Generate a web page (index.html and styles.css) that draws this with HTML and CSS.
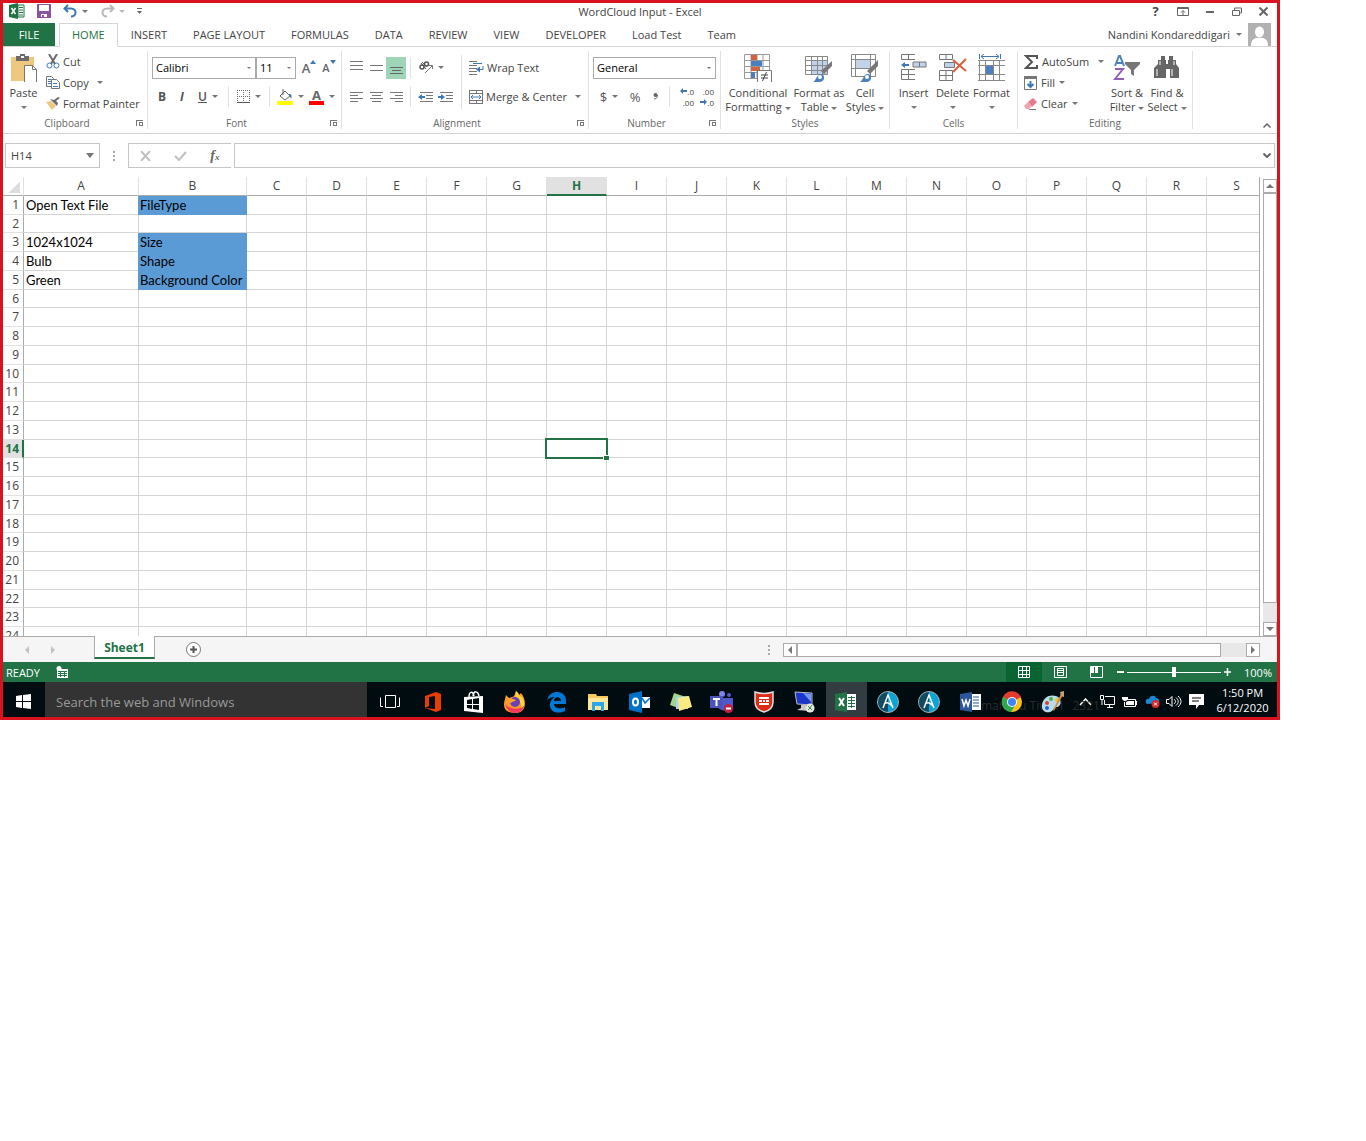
FILE: index.html
```html
<!DOCTYPE html>
<html lang="en">
<head>
  <meta charset="UTF-8" />
  <meta name="viewport" content="width=device-width, initial-scale=1.0">
  <title>WordCloud Input - Excel</title>
  <link rel="stylesheet" href="styles.css">
</head>
<body>

<div class="window">

  <!-- Title bar -->
  <header class="titlebar">
    <div class="quick-access">
      <svg class="app-icon" width="16" height="16" viewBox="0 0 16 16"><path d="M9 2h6v12H9z" fill="#fff" stroke="#217346"/><path d="M10 4.500h4M10 7h4M10 9.500h4M10 12h4" stroke="#217346"/><path d="M0 2l9-2v16l-9-2z" fill="#217346"/><path d="M2.500 5l4 6M6.500 5l-4 6" stroke="#fff" stroke-width="1.500"/></svg>
      <button title="Save"><svg width="14" height="14" viewBox="0 0 14 14"><path d="M0 0h14v14H0z" fill="#8a53a8"/><path d="M2 1h10v6H2zM4 10h6v3H7v-2H5v2H4z" fill="#fff"/></svg></button>
      <button class="has-caret" title="Undo"><svg width="15" height="14" viewBox="0 0 15 14"><path d="M5 1L1.500 4.500 5 8M2 4.500h6c6 0 6 8 0 8" fill="none" stroke="#3f78b5" stroke-width="2"/></svg><i class="caret"></i></button>
      <button class="has-caret" title="Redo"><svg width="15" height="14" viewBox="0 0 15 14"><path d="M10 1l3.500 3.500L10 8M13 4.500H7c-6 0-6 8 0 8" fill="none" stroke="#b9b9b9" stroke-width="2"/></svg><i class="caret light"></i></button>
      <button title="Customize Quick Access Toolbar"><svg width="5" height="6" viewBox="0 0 5 6"><path d="M0 .5h5" stroke="#666"/><path d="M0 3h5L2.500 6z" fill="#666"/></svg></button>
    </div>
    <h1>WordCloud Input - Excel</h1>
    <div class="window-buttons">
      <button title="Help"><b>?</b></button>
      <button title="Ribbon Display Options"><svg width="12" height="9" viewBox="0 0 12 9"><path d="M.5.500h11v8H.5zM.500 1.500h11M6 8V4M4 5.500l2-2 2 2" fill="none" stroke="#666"/></svg></button>
      <button title="Minimize"><svg width="8" height="4" viewBox="0 0 8 4"><path d="M0 3h8" stroke="#666" stroke-width="2"/></svg></button>
      <button title="Restore"><svg width="10" height="9" viewBox="0 0 10 9"><path d="M2.500 3V1h7v5H8" fill="none" stroke="#666"/><path d="M.5 3.500h7v5h-7z" fill="#fff" stroke="#666"/></svg></button>
      <button title="Close"><svg width="9" height="9" viewBox="0 0 9 9"><path d="M.5.500l8 8M8.500.500l-8 8" stroke="#666" stroke-width="2"/></svg></button>
    </div>
  </header>

  <!-- Ribbon tabs -->
  <nav class="tabs">
    <button class="file-tab">FILE</button>
    <a href="#home" class="tab active">HOME</a>
    <a href="#insert" class="tab">INSERT</a>
    <a href="#layout" class="tab">PAGE LAYOUT</a>
    <a href="#formulas" class="tab">FORMULAS</a>
    <a href="#data" class="tab">DATA</a>
    <a href="#review" class="tab">REVIEW</a>
    <a href="#view" class="tab">VIEW</a>
    <a href="#developer" class="tab">DEVELOPER</a>
    <a href="#loadtest" class="tab">Load Test</a>
    <a href="#team" class="tab">Team</a>
    <button class="user">Nandini Kondareddigari <i class="caret"></i>
      <svg width="23" height="23" viewBox="0 0 23 23"><path d="M0 0h23v23H0z" fill="#b1b1b1"/><ellipse cx="11.500" cy="9" rx="4.500" ry="5.500" fill="#fff"/><path d="M3 23c0-6 3-8 6-8h5c3 0 6 2 6 8z" fill="#fff"/></svg>
    </button>
  </nav>

  <!-- Ribbon -->
  <section class="ribbon" id="home">
    <div class="group clipboard">
      <div class="group-body">
        <button class="big paste"><svg width="26" height="28" viewBox="0 0 26 28"><path d="M0 3h23v24H0z" fill="#edc87e"/><path d="M5 7V2h4V0h5v2h4v5z" fill="#6b6b6b"/><path d="M10 2h3v2h-3z" fill="#fff"/><path d="M13.500 11.500h8l4 4V29h-12z" fill="#fff" stroke="#777"/><path d="M21.500 11.500v4h4" fill="none" stroke="#777"/></svg><span>Paste</span><i class="caret"></i></button>
        <div class="stack">
          <button><svg width="14" height="15" viewBox="0 0 14 15"><path d="M3 0l6 10M11 0L5 10" stroke="#6b6b6b" stroke-width="2"/><circle cx="3.500" cy="11.500" r="2.500" fill="none" stroke="#3f78b5"/><circle cx="10.500" cy="11.500" r="2.500" fill="none" stroke="#3f78b5"/></svg>Cut</button>
          <button><svg width="14" height="13" viewBox="0 0 14 13"><path d="M.5.500h5l2 2v8h-7z" fill="#fff" stroke="#777"/><path d="M5.500 3.500h5l3 3v6h-8z" fill="#fff" stroke="#777"/><path d="M2 3.500h3M2 5.500h3M2 7.500h3M7 7.500h4M7 10.500h5" stroke="#3f78b5"/></svg>Copy <i class="caret far"></i></button>
          <button><svg width="14" height="13" viewBox="0 0 14 13"><path d="M0 5l5-1 5 5-4 4z" fill="#edc87e"/><path d="M4 2l7 7 1-3-2-2 4-3-2-1-4 3z" fill="#6b6b6b"/></svg>Format Painter</button>
        </div>
      </div>
      <div class="group-label">Clipboard<i class="launcher"></i></div>
    </div>

    <div class="group font">
      <div class="group-body rows">
        <div class="row">
          <label class="drop font-name"><select aria-label="Font"><option>Calibri</option></select><i class="caret"></i></label>
          <label class="drop font-size"><select aria-label="Font size"><option>11</option></select><i class="caret"></i></label>
          <button class="tool grow" title="Increase Font Size">A<svg width="6" height="4" viewBox="0 0 6 4"><path d="M0 4l3-4 3 4z" fill="#3f78b5"/></svg></button>
          <button class="tool grow small" title="Decrease Font Size">A<svg width="6" height="4" viewBox="0 0 6 4"><path d="M0 0l3 4 3-4z" fill="#3f78b5"/></svg></button>
        </div>
        <div class="row">
          <button class="tool" title="Bold"><b>B</b></button>
          <button class="tool" title="Italic"><b><em>I</em></b></button>
          <button class="tool has-caret" title="Underline"><u>U</u><i class="caret"></i></button>
          <i class="divider"></i>
          <button class="tool has-caret" title="Borders"><svg width="13" height="13" viewBox="0 0 13 13"><path d="M.5 0v12M12.500 0v12M0 .5h13M6.500 0v12M0 6.500h13" stroke="#666" stroke-dasharray="1 1"/><path d="M0 12.500h13" stroke="#555"/></svg><i class="caret"></i></button>
          <i class="divider"></i>
          <button class="tool has-caret" title="Fill Color"><svg width="16" height="16" viewBox="0 0 16 16"><path d="M3 7l5-5 5 5-5 4zM6 0v6" fill="#fff" stroke="#666"/><path d="M12 5c3 0 3 2 2 5z" fill="#3f78b5"/><path d="M0 12h16v4H0z" fill="#ff0"/></svg><i class="caret"></i></button>
          <button class="tool has-caret" title="Font Color"><span class="font-color">A</span><i class="caret"></i></button>
        </div>
      </div>
      <div class="group-label">Font<i class="launcher"></i></div>
    </div>

    <div class="group alignment">
      <div class="group-body">
        <div class="rows">
          <div class="row">
            <button class="tool" title="Top Align"><svg width="13" height="13" viewBox="0 0 13 13"><path d="M0 .5h13M0 4.500h13M0 8.500h13" stroke="#777"/></svg></button>
            <button class="tool" title="Middle Align"><svg width="13" height="13" viewBox="0 0 13 13"><path d="M0 4.500h13M0 9.500h13" stroke="#777"/></svg></button>
            <button class="tool pressed" title="Bottom Align"><svg width="13" height="13" viewBox="0 0 13 13"><path d="M0 6.500h13M2 9.500h9M0 12.500h13" stroke="#666"/></svg></button>
            <i class="divider"></i>
            <button class="tool has-caret" title="Orientation"><svg width="14" height="13" viewBox="0 0 14 13"><path d="M6 12l7-7M10 4.500h3.500V8" fill="none" stroke="#777"/><circle cx="3" cy="6" r="2" fill="none" stroke="#555" stroke-width="1.500"/><circle cx="7.500" cy="3" r="2" fill="none" stroke="#555" stroke-width="1.500"/><path d="M2 2l5 6M3 1l5 5" stroke="#555"/></svg><i class="caret"></i></button>
          </div>
          <div class="row">
            <button class="tool" title="Align Left"><svg width="13" height="10" viewBox="0 0 13 10"><path d="M0 .5h13M0 3.500h8M0 6.500h13M0 9.500h8" stroke="#777"/></svg></button>
            <button class="tool" title="Center"><svg width="13" height="10" viewBox="0 0 13 10"><path d="M0 .5h13M2 3.500h9M0 6.500h13M2 9.500h9" stroke="#777"/></svg></button>
            <button class="tool" title="Align Right"><svg width="13" height="10" viewBox="0 0 13 10"><path d="M0 .5h13M5 3.500h8M0 6.500h13M5 9.500h8" stroke="#777"/></svg></button>
            <i class="divider"></i>
            <button class="tool" title="Decrease Indent"><svg width="15" height="10" viewBox="0 0 15 10"><path d="M2 .5h13M8 3.500h7M8 6.500h7M2 9.500h13" stroke="#777"/><path d="M0 5l4-3v2h3v2H4v2z" fill="#3f78b5"/></svg></button>
            <button class="tool" title="Increase Indent"><svg width="15" height="10" viewBox="0 0 15 10"><path d="M2 .5h13M8 3.500h7M8 6.500h7M2 9.500h13" stroke="#777"/><path d="M7 5L3 2v2H0v2h3v2z" fill="#3f78b5"/></svg></button>
          </div>
        </div>
        <i class="divider tall"></i>
        <div class="rows wrap-merge">
          <div class="row"><button class="text-tool"><svg width="15" height="14" viewBox="0 0 15 14"><path d="M0 .5h8M0 4.500h8M0 7.500h8M0 10.500h8M0 13.500h8" stroke="#777"/><path d="M4 2.500h9M9 8.500h5V5" fill="none" stroke="#3f78b5"/><path d="M7 8.500l4-3v6z" fill="#3f78b5"/></svg>Wrap Text</button></div>
          <div class="row"><button class="text-tool"><svg width="14" height="14" viewBox="0 0 14 14"><path d="M0 .5h14M.500 0v4M7.500 0v4M13.500 0v4M0 3.500h14M0 10.500h14M.500 10v4M7.500 10v4M13.500 10v4M0 13.500h14M.5 4v6M13.500 4v6" stroke="#777"/><path d="M2 7h10M4 5L2 7l2 2M10 5l2 2-2 2" fill="none" stroke="#3f78b5"/></svg>Merge &amp; Center <i class="caret far"></i></button></div>
        </div>
      </div>
      <div class="group-label">Alignment<i class="launcher"></i></div>
    </div>

    <div class="group number">
      <div class="group-body rows">
        <div class="row">
          <label class="drop format"><select aria-label="Number format"><option>General</option></select><i class="caret"></i></label>
        </div>
        <div class="row">
          <button class="tool has-caret sign" title="Accounting">$<i class="caret"></i></button>
          <button class="tool sign" title="Percent">%</button>
          <button class="tool sign" title="Comma Style"><svg width="5" height="7" viewBox="0 0 5 7"><circle cx="2.500" cy="2" r="2" fill="#666"/><path d="M4.500 2c0 2-1 4-3.500 4" fill="none" stroke="#666"/></svg></button>
          <i class="divider"></i>
          <button class="tool decimal" title="Increase Decimal"><span><svg width="7" height="6" viewBox="0 0 7 6"><path d="M0 3l3-3v2h4v2H3v2z" fill="#3f78b5"/></svg>.0</span><span>.00</span></button>
          <button class="tool decimal" title="Decrease Decimal"><span>.00</span><span><svg width="7" height="6" viewBox="0 0 7 6"><path d="M7 3L4 0v2H0v2h4v2z" fill="#3f78b5"/></svg>.0</span></button>
        </div>
      </div>
      <div class="group-label">Number<i class="launcher"></i></div>
    </div>

    <div class="group styles">
      <div class="group-body">
        <button class="big wide"><svg width="28" height="28" viewBox="0 0 28 28"><path d="M.5.500h25v24H.5zM.5 6.500h25M.5 12.500h25M.5 18.500h25M7 0v24M13 0v24M19 0v24" fill="#fff" stroke="#999"/><path d="M7 1h6v5H7zM7 13h9v4H7z" fill="#d9603f"/><path d="M7 7h11v5H7zM7 18h4v6H7z" fill="#4a80bd"/><path d="M13.500 16.500h14v12h-14z" fill="#fff" stroke="#777"/><path d="M17 21h7M17 24h7M22.500 18l-4 9" stroke="#444"/></svg><span>Conditional</span><span>Formatting <i class="caret"></i></span></button>
        <button class="big medium"><svg width="28" height="28" viewBox="0 0 28 28"><path d="M7 7h16v13H7z" fill="#c0d3ea"/><path d="M.5 2.500h22v18H.5zM.5 6.500h22M.5 11.500h22M.5 16.500h22M6.500 3v18M12.500 3v18M17.500 3v18" fill="none" stroke="#888"/><path d="M27 7v5l-8 8-3-3z" fill="#777"/><path d="M8 28c3-1 3-7 8-8 4 0 5 8-2 8z" fill="#4a80bd"/><circle cx="15" cy="23" r="2" fill="#fff"/></svg><span>Format as</span><span>Table <i class="caret"></i></span></button>
        <button class="big"><svg width="28" height="28" viewBox="0 0 28 28"><path d="M5 6h14v8H5z" fill="#c0d3ea"/><path d="M.5.500h24v22H.5zM.5 5.500h24M.5 14.500h24M4.500 0v22M19.500 0v22" fill="none" stroke="#888"/><path d="M27 6v6l-8 8-3-3z" fill="#777"/><path d="M9 28c3-1 3-8 8-8 4 0 5 8-2 8z" fill="#4a80bd"/><circle cx="16" cy="23" r="2" fill="#fff"/></svg><span>Cell</span><span>Styles <i class="caret"></i></span></button>
      </div>
      <div class="group-label">Styles</div>
    </div>

    <div class="group cells">
      <div class="group-body">
        <button class="big"><svg width="26" height="28" viewBox="0 0 26 28"><path d="M14 .5H.5v5H14M7.500 0v5M14 15.500H.5v10H14M.5 20.500H14M7.500 15v10" fill="none" stroke="#777"/><path d="M12 8h13v5H12z" fill="#c0d3ea" stroke="#777"/><path d="M18.500 8v5" stroke="#777"/><path d="M0 11l4-3v2h4v2H4v2z" fill="#3f78b5"/></svg><span>Insert</span><i class="caret"></i></button>
        <button class="big"><svg width="28" height="28" viewBox="0 0 28 28"><path d="M.5.500h13v5H.5zM7 0v5M.5 16.500h13v10H.5zM.5 21.500h13M7 16v10" fill="none" stroke="#777"/><path d="M5.500 8.500h10v5h-10z" fill="#c0d3ea" stroke="#777"/><path d="M14 6l13 11M27 5L14 18" stroke="#d9603f" stroke-width="2"/></svg><span>Delete</span><i class="caret"></i></button>
        <button class="big"><svg width="27" height="28" viewBox="0 0 27 28"><path d="M1.500 0v5M22.500 0v5M3 2.500h18M6 0L3 2.500 6 5M18 0l3 2.500L18 5" fill="none" stroke="#3f78b5"/><path d="M0 6.500h27M0 11.500h27M0 20.500h27M0 26.500h27M1.500 6v20M7.500 6v20M15.500 6v20M21.500 6v20" stroke="#888"/><path d="M8 12h7v8H8z" fill="#4a80bd"/></svg><span>Format</span><i class="caret"></i></button>
      </div>
      <div class="group-label">Cells</div>
    </div>

    <div class="group editing">
      <div class="group-body">
        <div class="stack">
          <button><svg width="14" height="14" viewBox="0 0 14 14"><path d="M13 4V1H2l6 6-6 6h11v-3" fill="none" stroke="#555" stroke-width="2"/></svg>AutoSum <i class="caret far"></i></button>
          <button><svg width="13" height="14" viewBox="0 0 13 14"><path d="M.5.500h12v13H.5z" fill="#fff" stroke="#777"/><path d="M0 0h13v3H0z" fill="#777"/><path d="M6.500 5v6M3.500 8l3 3 3-3" fill="none" stroke="#3f78b5" stroke-width="2"/></svg>Fill <i class="caret"></i></button>
          <button><svg width="13" height="12" viewBox="0 0 13 12"><path d="M4 4l5-4 4 4-5 5z" fill="#e8798c"/><path d="M0 8l4-4 4 4-3 3H2z" fill="#f0a3b0"/><path d="M5 11.500h7" stroke="#777"/></svg>Clear <i class="caret"></i></button>
        </div>
        <button class="big"><svg width="28" height="28" viewBox="0 0 28 28"><path d="M2 12L6 2h1l4 10M4 9h5" fill="none" stroke="#4a80bd" stroke-width="2"/><path d="M2 15h8L2 25h9" fill="none" stroke="#9160b5" stroke-width="2"/><path d="M12 8h15v2l-6 6v6l-3-2v-4l-6-6z" fill="#777"/></svg><span>Sort &amp;</span><span>Filter <i class="caret"></i></span></button>
        <button class="big"><svg width="26" height="28" viewBox="0 0 26 28"><path d="M4 6h3V2h4v4h1v4h2V6h1V2h4v4h3v4l3 4v10h-9v-9h-4v9H0V14l4-4z" fill="#666"/><path d="M3 15v7M18 15v7M6 7v4M20 7v4" stroke="#fff"/></svg><span>Find &amp;</span><span>Select <i class="caret"></i></span></button>
      </div>
      <div class="group-label">Editing</div>
    </div>

    <button class="collapse" title="Collapse the Ribbon"><svg width="8" height="5" viewBox="0 0 8 5"><path d="M.5 4.500L4 1l3.500 3.500" fill="none" stroke="#666" stroke-width="1.500"/></svg></button>
  </section>

  <!-- Formula bar -->
  <section class="formula-bar">
    <label class="name-box"><input type="text" value="H14" aria-label="Name Box"><i class="caret big-caret"></i></label>
    <i class="dots"></i>
    <div class="formula-buttons">
      <button title="Cancel"><svg width="11" height="10" viewBox="0 0 11 10"><path d="M1 0l9 10M10 0L1 10" stroke="#c0c0c0" stroke-width="2"/></svg></button>
      <button title="Enter"><svg width="13" height="10" viewBox="0 0 13 10"><path d="M1 5l4 4 7-8" fill="none" stroke="#c0c0c0" stroke-width="2"/></svg></button>
      <button class="fx" title="Insert Function"><em>f<small>x</small></em></button>
    </div>
    <label class="formula-input"><input type="text" aria-label="Formula Bar"><svg width="8" height="5" viewBox="0 0 8 5"><path d="M.5.500L4 4 7.500.500" fill="none" stroke="#666" stroke-width="2"/></svg></label>
  </section>

  <!-- Worksheet -->
  <main class="sheet">
    <div class="grid-wrap">
      <table class="grid">
        <thead><tr id="gridHead"></tr></thead>
        <tbody id="gridBody"></tbody>
      </table>
    </div>
    <div class="v-scroll">
      <button title="Scroll up"><i class="arrow up"></i></button>
      <div class="thumb"></div>
      <button title="Scroll down"><i class="arrow down"></i></button>
    </div>
  </main>

  <!-- Sheet tabs -->
  <section class="sheet-bar">
    <button class="sheet-nav" title="Previous sheet"><i class="arrow left"></i></button>
    <button class="sheet-nav" title="Next sheet"><i class="arrow right"></i></button>
    <a href="#sheet1" class="sheet-tab">Sheet1</a>
    <button class="add-sheet" title="New sheet"><svg width="15" height="15" viewBox="0 0 15 15"><circle cx="7.500" cy="7.500" r="7" fill="#fff" stroke="#777"/><path d="M7.500 4v7M4 7.500h7" stroke="#555" stroke-width="2"/></svg></button>
    <i class="dots"></i>
    <div class="h-scroll">
      <button title="Scroll left"><i class="arrow left"></i></button>
      <div class="thumb"></div>
      <button title="Scroll right"><i class="arrow right"></i></button>
    </div>
  </section>

  <!-- Status bar -->
  <section class="status-bar">
    <span>READY</span>
    <svg class="macro" width="12" height="12" viewBox="0 0 12 12"><path d="M1 3h11v9H1z" fill="#fff"/><circle cx="3" cy="2.500" r="2.500" fill="#fff"/><path d="M2 5.500h9M2 7.500h9M2 9.500h9M4.500 5v6M8.500 5v6" stroke="#217346"/></svg>
    <div class="views">
      <button class="current" title="Normal"><svg width="12" height="12" viewBox="0 0 12 12"><path d="M.5.500h11v11H.5zM0 4.500h12M0 8.500h12M4.500 0v12M8.500 0v12" fill="none" stroke="#fff"/></svg></button>
      <button title="Page Layout"><svg width="13" height="12" viewBox="0 0 13 12"><path d="M.5.500h12v11H.5zM3.500 2.500h6v7h-6zM4 4.500h5M4 6.500h5" fill="none" stroke="#fff"/></svg></button>
      <button title="Page Break Preview"><svg width="13" height="12" viewBox="0 0 13 12"><path d="M.5.500h12v11H.5z" fill="none" stroke="#fff"/><path d="M1 1h3v6H1zM5 1h3v6H5z" fill="#fff"/></svg></button>
    </div>
    <button class="zoom-btn" title="Zoom out"><svg width="7" height="8" viewBox="0 0 7 8"><path d="M0 4h7" stroke="#fff" stroke-width="2"/></svg></button>
    <input type="range" min="10" max="190" value="100" aria-label="Zoom">
    <button class="zoom-btn" title="Zoom in"><svg width="7" height="8" viewBox="0 0 7 8"><path d="M0 4h7M3.500 0v8" stroke="#fff" stroke-width="1.500"/></svg></button>
    <span class="zoom-level">100%</span>
  </section>

  <!-- Windows taskbar -->
  <footer class="taskbar">
    <button class="start" title="Start"><svg width="15" height="15" viewBox="0 0 15 15"><path d="M0 2l6-1v6H0zM7 1l8-1v7H7zM0 8h6v6l-6-1zM7 8h8v7l-8-1z" fill="#fff"/></svg></button>
    <input class="search" type="text" placeholder="Search the web and Windows" aria-label="Search the web and Windows">
    <button class="task-view" title="Task View"><svg width="20" height="14" viewBox="0 0 20 14"><path d="M5.500.500h10v12h-10zM3 11.500H.5v-9M17 11.500h2.500v-9" fill="none" stroke="#fff"/></svg></button>
    <div class="apps">
      <button title="Office"><svg width="22" height="22" viewBox="0 0 22 22"><path d="M3 5l11-4 5 2v16l-5 2-11-4 10 1V5L7 6v9l-4 2z" fill="#eb3c00"/></svg></button>
      <button title="Store"><svg width="22" height="22" viewBox="0 0 22 22"><path d="M6 6c0-6 4-6 5-1M10 5c1-6 5-5 6 0" fill="none" stroke="#fff" stroke-width="1.500"/><path d="M1 6l19-1v17L1 20z" fill="#fff"/><path d="M4 9l5-1v5H4zM10 8l6-1v6h-6zM4 14h5v4l-5-1zM10 14h6v5l-6-1z" fill="#000c10"/><path d="M5 10l3-1v3H5zM11 9l4-1v4h-4zM5 15h3v2l-3-1zM11 15h4v3l-4-1z" fill="#000c10"/></svg></button>
      <button title="Firefox"><svg width="22" height="22" viewBox="0 0 22 22"><path d="M1 8l1-4 3 3 3-1c1 0 3-1 4-6 2 1 3 3 3 4l2-2c6 7 6 20-6 20S-1 14 1 8z" fill="#ff9a2a"/><path d="M12 0c2 2 3 5 6 6 3 4 3 10-1 12 1-5-1-9-5-10-1-2-1-5 0-8z" fill="#ffd43b"/><path d="M1 13c2 6 6 9 10 9 5 0 8-3 9-7-4 4-14 4-19-2z" fill="#f5365c"/><circle cx="11" cy="11" r="5" fill="#6b3fb8"/><path d="M4 7c3 0 5 1 8 2-1 2-4 1-5 3-3-1-4-3-3-5z" fill="#ffa62b"/></svg></button>
      <button title="Edge"><svg width="22" height="22" viewBox="0 0 22 22"><path d="M1 9C3 3 7 1 11 1c6 0 9 4 9 9v3H8c0 4 6 6 11 3v4C11 24 3 20 4 13c0-3 3-6 5-7-4 0-6 1-8 3zm7 1h7c0-5-7-5-7 0z" fill="#0078d7"/></svg></button>
      <button title="File Explorer"><svg width="22" height="20" viewBox="0 0 22 20"><path d="M1 2h8l1 2h11v14H1z" fill="#f4c95d"/><path d="M1 6h20v12H1z" fill="#ffe69a"/><path d="M5 10h12v9h-3v-5H8v5H5z" fill="#29a9ea"/></svg></button>
      <button title="Outlook"><svg width="22" height="22" viewBox="0 0 22 22"><path d="M12 6h9v11h-9z" fill="#fff"/><path d="M13 7l3 5 5-5" fill="none" stroke="#0072c6" stroke-width="1.500"/><path d="M0 3l13-3v22L0 19z" fill="#0072c6"/><ellipse cx="6.500" cy="11" rx="2.500" ry="3.500" fill="none" stroke="#fff" stroke-width="2"/></svg></button>
      <button title="Sticky Notes"><svg width="22" height="20" viewBox="0 0 22 20"><path d="M4 1l12 4-5 12L0 13z" fill="#9fd58b"/><path d="M6 5l12-1v13H6z" fill="#a7d3ee"/><path d="M8 6l11-2 3 11-13 4z" fill="#f9ea83"/></svg></button>
      <button title="Teams"><svg width="24" height="22" viewBox="0 0 24 22"><circle cx="12" cy="3" r="3" fill="#7b83eb"/><circle cx="19" cy="4" r="2" fill="#5059c9"/><path d="M8 7h15v9c0 5-13 5-15 0z" fill="#5059c9"/><path d="M0 5h13v12H0z" fill="#4b53bc"/><path d="M3 8h7M6.500 8v7" stroke="#fff" stroke-width="2"/><circle cx="18.500" cy="17.500" r="4.500" fill="#c4213f"/><path d="M16 17.500h5" stroke="#fff" stroke-width="2"/></svg></button>
      <button title="FortiClient"><svg width="20" height="22" viewBox="0 0 20 22"><path d="M1 1c6 2 12 2 18 0v10c0 6-5 9-9 10-4-1-9-4-9-10z" fill="#df2a16" stroke="#ddd" stroke-width="1.500"/><path d="M5 6h10v8H5z" fill="#fff"/><path d="M5 8.500h10M5 11.500h10M8.500 8v4M11.500 8v4" stroke="#df2a16"/></svg></button>
      <button title="Remote Desktop"><svg width="22" height="22" viewBox="0 0 22 22"><path d="M1 1l17 1v12L3 13z" fill="#1c36c9" stroke="#bbb"/><path d="M9 2l8 1v8z" fill="#6f9cf2"/><path d="M7 14h5v3l3 3-12-1 4-2z" fill="#c8c8c8"/><circle cx="16" cy="17" r="4.500" fill="#e8e8e8"/><path d="M14 15l2 2-2 2M18 14l-2 3 2 2" fill="none" stroke="#3a8f3a"/></svg></button>
      <button class="open" title="Excel"><svg width="22" height="20" viewBox="0 0 22 20"><path d="M12 2h9v16h-9z" fill="#fff"/><path d="M13 5.500h7M13 8.500h7M13 11.500h7M13 14.500h7M16.500 4v12" stroke="#217346"/><path d="M0 2l12-2v20L0 18z" fill="#217346"/><path d="M4 6l5 8M9 6l-5 8" stroke="#fff" stroke-width="2"/></svg></button>
      <button title="Automation Studio"><svg width="22" height="22" viewBox="0 0 22 22"><circle cx="11" cy="11" r="10.500" fill="#0aa4d6" stroke="#aaa"/><path d="M11 1a10 10 0 0 0 0 20z" fill="#124a61"/><path d="M6 17l5-13 5 13M7 13c4-3 6 0 8 2" fill="none" stroke="#fff" stroke-width="1.500"/></svg></button>
      <button title="Automation Client"><svg width="22" height="22" viewBox="0 0 22 22"><circle cx="11" cy="11" r="10.500" fill="#0aa4d6" stroke="#aaa"/><path d="M11 1a10 10 0 0 0 0 20z" fill="#124a61"/><path d="M6 17l5-13 5 13M7 13c4-3 6 0 8 2" fill="none" stroke="#fff" stroke-width="1.500"/></svg></button>
      <button title="Word"><span class="ghost">manshu Tiwari &nbsp; 2321</span><svg width="22" height="20" viewBox="0 0 22 20"><path d="M12 2h9v16h-9z" fill="#fff"/><path d="M13 5h6M13 8h6M13 11h6M13 14h6" stroke="#2b579a"/><path d="M0 2l12-2v20L0 18z" fill="#2b579a"/><path d="M2 7l2 7 2-6 2 6 2-7" fill="none" stroke="#fff" stroke-width="1.500"/></svg></button>
      <button title="Chrome"><svg width="22" height="22" viewBox="0 0 22 22"><circle cx="11" cy="11" r="10" fill="#fbc116"/><path d="M11 11L2 6a10 10 0 0 1 18 0z" fill="#e33b2e"/><path d="M11 11L2 6a10 10 0 0 0 8 15l5-8z" fill="#2da94f"/><circle cx="11" cy="11" r="5" fill="#fff"/><circle cx="11" cy="11" r="4" fill="#4285f4"/></svg></button>
      <button title="Paint"><svg width="24" height="22" viewBox="0 0 24 22"><path d="M1 14C2 6 9 3 15 5c6 2 6 10 1 11-3 0-3 2-5 4-4 3-11 1-10-6z" fill="#b7dcf0"/><circle cx="6" cy="12" r="2" fill="#d8412f"/><circle cx="10" cy="8" r="2" fill="#4fae46"/><circle cx="16" cy="9" r="2" fill="#f3c21c"/><circle cx="6" cy="17" r="2" fill="#2f60c9"/><path d="M20 3l2 1-9 16-1-1z" fill="#d98a35"/><path d="M19 1l4-1v6l-3-1z" fill="#c59f74"/></svg></button>
    </div>
    <div class="tray">
      <svg width="13" height="8" viewBox="0 0 13 8"><path d="M1 7l5.500-6L12 7" fill="none" stroke="#fff" stroke-width="1.500"/></svg>
      <svg width="15" height="13" viewBox="0 0 15 13"><path d="M5 1.500h9.500v8H4.500V5M7 12.500h6M9.500 10v2M.5.500h3v4h-3zM2 5v5" fill="none" stroke="#fff"/></svg>
      <svg width="15" height="12" viewBox="0 0 15 12"><path d="M4 3.500h9.500v7H2.500V6" fill="none" stroke="#fff"/><path d="M6 5h6v4H4V6zM14 5h1v4h-1zM0 1h6v2l-2 2H2L0 3z" fill="#fff"/></svg>
      <svg width="15" height="13" viewBox="0 0 15 13"><path d="M2 9C-1 6 2 3 4 4c1-4 6-4 7-1 3 0 4 3 3 5z" fill="#1688d4"/><circle cx="10.500" cy="9" r="4" fill="#d42a2a"/><path d="M9 7.500l3 3M12 7.500l-3 3" stroke="#fff"/></svg>
      <svg width="16" height="13" viewBox="0 0 16 13"><path d="M.5 4.500H3l3-3v10l-3-3H.5zM8 4c2 2 2 3 0 5M10 2.500c3 3 3 5 0 8M12 1c4 4 4 7 0 11" fill="none" stroke="#fff"/></svg>
      <svg width="15" height="15" viewBox="0 0 15 15"><path d="M0 0h15v11h-5l-3 4v-4H0z" fill="#fff"/><path d="M3 4h9M3 7h7" stroke="#000"/></svg>
    </div>
    <time class="clock">1:50 PM<br>6/12/2020</time>
  </footer>

</div>

<script>
  const columns = "ABCDEFGHIJKLMNOPQRS".split("");
  const rowCount = 24;
  const active = "H14";
  const cells = {
    A1: "Open Text File", B1: "FileType",
    A3: "1024x1024", B3: "Size",
    A4: "Bulb", B4: "Shape",
    A5: "Green", B5: "Background Color"
  };

  document.getElementById("gridHead").innerHTML =
    `<th class="corner"></th>` +
    columns.map(c => `<th class="col-${c}${c === active[0] ? " selected" : ""}">${c}</th>`).join("");

  let html = "";
  for (let r = 1; r <= rowCount; r++) {
    html += `<tr><th class="${r === 14 ? "selected" : ""}">${r}</th>`;
    columns.forEach(c => {
      const id = c + r;
      let cls = "";
      if (c === "B" && cells[id]) cls = "filled";
      if (id === active) cls = "active";
      html += `<td class="${cls}">${cells[id] || ""}</td>`;
    });
    html += "</tr>";
  }
  document.getElementById("gridBody").innerHTML = html;
</script>

</body>
</html>
```

FILE: styles.css
```css
* {
  box-sizing: border-box;
}

body {
  margin: 0;
  padding-right: 86px;
  background: #fff;
  font-family: "Open Sans", "Noto Sans", sans-serif;
  font-size: 11px;
  color: #444;
}

button,
input,
select {
  font: inherit;
  color: inherit;
  margin: 0;
  padding: 0;
  border: none;
  background: none;
  border-radius: 0;
  outline: none;
}

button {
  display: flex;
  align-items: center;
  justify-content: center;
  white-space: nowrap;
}

a {
  color: inherit;
  text-decoration: none;
}

svg {
  display: block;
  flex-shrink: 0;
}

.window {
  border: 3px solid #da1220;
}

/* small down arrow used by every drop-down */
.caret {
  display: inline-block;
  flex-shrink: 0;
  border: 3px solid transparent;
  border-top-color: #777;
  border-bottom: none;
  vertical-align: middle;
}

.caret.light {
  border-top-color: #bbb;
}

.caret.big-caret {
  border-width: 5px 4px 0;
}

.caret.far {
  margin-left: 5px;
}

.has-caret {
  gap: 5px;
}

/* Title bar */
.titlebar {
  display: grid;
  grid-template-columns: 1fr auto 1fr;
  align-items: center;
  height: 20px;
  padding-bottom: 4px;
}

.titlebar h1 {
  margin: 0;
  font-size: 11px;
  font-weight: 400;
}

.quick-access {
  display: flex;
  align-items: center;
  gap: 12px;
  padding-left: 6px;
}

.quick-access .has-caret {
  gap: 4px;
}

.window-buttons {
  display: flex;
  justify-content: flex-end;
}

.window-buttons button {
  width: 27px;
  height: 16px;
  font-size: 13px;
}

/* Ribbon tabs */
.tabs {
  display: flex;
  height: 24px;
  line-height: 23px;
  border-bottom: 1px solid #d4d4d4;
}

.file-tab {
  width: 52px;
  margin-right: 4px;
  background: #217346;
  color: #fff;
}

.tab {
  padding: 0 13px;
}

.tab.active {
  height: 24px;
  padding: 0 12px;
  border: 1px solid #d4d4d4;
  border-bottom-color: #fff;
  background: #fff;
  color: #217346;
  line-height: 22px;
}

.user {
  margin-left: auto;
  padding-right: 6px;
  gap: 6px;
}

/* Ribbon */
.ribbon {
  display: flex;
  height: 87px;
  padding: 4px 0;
  border-bottom: 1px solid #d4d4d4;
}

.group {
  display: flex;
  flex-direction: column;
  border-right: 1px solid #e1e1e1;
}

.group-body {
  display: flex;
  height: 67px;
}

.group-label {
  display: flex;
  justify-content: center;
  position: relative;
  padding-top: 3px;
  line-height: 12px;
  font-size: 10px;
  color: #666;
}

.launcher {
  position: absolute;
  right: 4px;
  top: 6px;
  width: 7px;
  height: 6px;
  border-top: 1px solid #777;
  border-left: 1px solid #777;
  background: linear-gradient(#777, #777) 100% 100% / 4px 4px no-repeat;
}

.launcher::after {
  content: "";
  position: absolute;
  right: 1px;
  bottom: 1px;
  width: 2px;
  height: 2px;
  background: #fff;
}

.clipboard { width: 145px; }
.font { width: 194px; }
.alignment { width: 247px; }
.number { width: 132px; }
.styles { width: 169px; }
.cells { width: 128px; }
.editing { width: 175px; }

/* labels with a launcher are centred in the space left of it */
.clipboard .group-label,
.font .group-label,
.alignment .group-label,
.number .group-label {
  padding-right: 16px;
}

.big {
  flex-direction: column;
  justify-content: flex-start;
  width: 40px;
  padding-top: 3px;
  line-height: 14px;
}

.big svg {
  margin-bottom: 4px;
}

.big > .caret {
  margin-top: 6px;
}

.big.paste { width: 41px; }
.big.wide { width: 70px; }
.big.medium { width: 52px; }

.styles .group-body { padding-left: 2px; }
.cells .group-body { padding-left: 4px; }
.cells .big { width: 39px; }

.stack button {
  height: 21px;
  gap: 4px;
}

.clipboard .stack {
  padding-left: 2px;
}

.clipboard .stack button {
  gap: 3px;
}

.editing .stack {
  width: 89px;
  padding-left: 6px;
}

.rows {
  display: flex;
  flex-direction: column;
  padding-top: 2px;
}

.row {
  display: flex;
  align-items: center;
  height: 29px;
}

.tool {
  height: 22px;
  min-width: 20px;
}

.font .rows {
  padding-left: 4px;
}

.drop {
  position: relative;
  display: flex;
  height: 22px;
}

.drop select {
  appearance: none;
  width: 100%;
  padding-left: 3px;
  border: 1px solid #ababab;
  color: #000;
}

.drop .caret {
  position: absolute;
  right: 5px;
  top: 10px;
  border-width: 2px 2px 0;
}

.font-name { width: 104px; }
.font-size { width: 40px; margin-right: 3px; }
.format { width: 123px; }

.grow {
  align-items: center;
  font-size: 13px;
  font-weight: 600;
  color: #666;
}

.grow svg {
  margin-bottom: 12px;
}

.grow.small {
  font-size: 11px;
}

.font .row b,
.font .row u {
  font-size: 12px;
  font-weight: 700;
  color: #555;
}

.font .row u {
  font-weight: 600;
}

.font .tool.has-caret {
  min-width: 32px;
}

.divider {
  width: 1px;
  height: 21px;
  margin: 0 4px;
  background: #e1e1e1;
}

.divider.tall {
  height: 54px;
  margin-top: 4px;
}

.font-color {
  width: 15px;
  border-bottom: 4px solid #f00;
  font-size: 13px;
  font-weight: 700;
  line-height: 12px;
  color: #666;
}

.alignment .rows {
  padding-left: 4px;
}

.alignment .rows:first-child {
  width: 115px;
}

.alignment .wrap-merge {
  padding-left: 3px;
}

.alignment .tool.has-caret {
  min-width: 32px;
}

.tool.pressed {
  background: #9fd5b7;
}

.text-tool {
  gap: 3px;
}

.number .rows {
  padding-left: 4px;
}

.sign {
  font-size: 13px;
  color: #555;
}

.number .sign.has-caret {
  min-width: 32px;
}

.decimal {
  flex-direction: column;
  align-items: flex-end;
  font-size: 8px;
  line-height: 11px;
}

.decimal span {
  display: flex;
  align-items: center;
}

.collapse {
  margin-left: auto;
  align-self: flex-end;
  width: 20px;
  height: 8px;
}

/* Formula bar */
.formula-bar {
  display: flex;
  align-items: center;
  height: 43px;
  padding: 0 2px;
}

.name-box,
.formula-input,
.formula-buttons {
  display: flex;
  align-items: center;
  height: 25px;
  border: 1px solid #c6c6c6;
}

.name-box {
  width: 95px;
  padding: 0 5px;
}

.name-box input,
.formula-input input {
  flex: 1;
  min-width: 0;
}

.dots {
  width: 2px;
  height: 10px;
  margin: 0 13px;
  background: repeating-linear-gradient(#aaa 0 2px, transparent 2px 4px);
}

.formula-buttons {
  justify-content: space-around;
  width: 103px;
  margin-right: 3px;
  border-right: none;
}

.fx {
  font-family: "Liberation Serif", serif;
  font-size: 14px;
  font-weight: 700;
  color: #666;
}

.fx small {
  font-size: 9px;
}

.formula-input {
  flex: 1;
  padding-right: 3px;
}

/* Worksheet */
.sheet {
  display: flex;
  height: 459px;
}

.grid-wrap {
  flex: 1;
  min-width: 0;
  overflow: hidden;
  border-right: 1px solid #ababab;
}

.grid {
  table-layout: fixed;
  width: 1264px;
  border-spacing: 0;
  line-height: 16px;
}

.grid th {
  padding: 0;
  border-right: 1px solid #e1e1e1;
  font-size: 12px;
  font-weight: 400;
}

.grid thead th {
  width: 60px;
  height: 19px;
  border-bottom: 1px solid #ababab;
}

.grid thead .corner {
  width: 21px;
  background: linear-gradient(135deg, transparent 50%, #ddd 50%) 6px 5px / 11px 11px no-repeat;
}

.grid thead .col-A { width: 115px; }
.grid thead .col-B { width: 108px; }

.grid tbody tr {
  height: 19px;
}

.grid tbody tr:nth-child(4n + 2) {
  height: 18px;
}

.grid tbody th {
  border-right: 1px solid #ababab;
  border-bottom: 1px solid #e1e1e1;
  padding-right: 4px;
  text-align: right;
}

.grid td {
  padding: 0 2px;
  border-right: 1px solid #d4d4d4;
  border-bottom: 1px solid #d4d4d4;
  font-family: Lato, "Open Sans", sans-serif;
  font-size: 13px;
  color: #000;
  white-space: nowrap;
}

.grid td.filled {
  padding-left: 1px;
  background: #5b9bd5;
  border-color: #5b9bd5;
  box-shadow: -1px 0 #5b9bd5;
}

.grid .selected {
  background: #e1e1e1;
  color: #217346;
  font-weight: 700;
}

.grid thead .selected {
  border-bottom: 2px solid #217346;
}

.grid tbody .selected {
  border-right: 2px solid #217346;
  padding-right: 3px;
}

.grid td.active {
  position: relative;
}

.grid td.active::before {
  content: "";
  position: absolute;
  inset: -2px;
  border: 2px solid #217346;
}

.grid td.active::after {
  content: "";
  position: absolute;
  right: -3px;
  bottom: -3px;
  width: 5px;
  height: 4px;
  border: solid #fff;
  border-width: 1px 0 0 1px;
  box-sizing: content-box;
  background: #217346;
}

/* Scrollbars */
.v-scroll,
.h-scroll {
  display: flex;
  background: #e8e8e8;
}

.v-scroll {
  flex-direction: column;
  width: 14px;
  margin: 2px 0 0 3px;
}

.v-scroll button,
.h-scroll button {
  width: 14px;
  height: 14px;
  border: 1px solid #ababab;
  background: #fff;
}

.v-scroll .thumb,
.h-scroll .thumb {
  flex: 1;
  border: 1px solid #ababab;
  background: #fff;
}

.v-scroll .thumb {
  margin-bottom: 19px;
}

.h-scroll .thumb {
  margin-right: 25px;
}

.arrow {
  border: 4px solid transparent;
}

.arrow.up { border-bottom-color: #777; border-top: none; }
.arrow.down { border-top-color: #777; border-bottom: none; }
.arrow.left { border-right-color: #777; border-left: none; }
.arrow.right { border-left-color: #777; border-right: none; }

/* Sheet tabs */
.sheet-bar {
  display: flex;
  align-items: center;
  height: 26px;
  padding-left: 11px;
  border-top: 1px solid #ababab;
  background: #f5f5f5;
}

.sheet-nav {
  width: 26px;
  opacity: 0.4;
}

.sheet-tab {
  align-self: flex-start;
  width: 61px;
  height: 23px;
  margin: -1px 31px 0 28px;
  border: solid #ababab;
  border-width: 0 1px;
  border-bottom: 2px solid #217346;
  background: #fff;
  color: #217346;
  font-size: 12px;
  font-weight: 700;
  line-height: 23px;
  text-align: center;
}

.sheet-bar .dots {
  margin-left: auto;
}

.h-scroll {
  width: 477px;
  height: 14px;
  margin-right: 17px;
}

/* Status bar */
.status-bar {
  display: flex;
  align-items: center;
  height: 20px;
  padding: 0 5px 0 3px;
  background: #217346;
  color: #fff;
}

.status-bar .macro {
  margin-left: 16px;
}

.views {
  display: flex;
  height: 20px;
  margin-left: auto;
}

.views button {
  width: 36px;
}

.views .current {
  background: #0a6332;
}

.zoom-btn {
  width: 13px;
}

.status-bar input[type="range"] {
  appearance: none;
  width: 94px;
  height: 11px;
  background: linear-gradient(#fff, #fff) center / 100% 1px no-repeat;
}

.status-bar input[type="range"]::-webkit-slider-thumb {
  appearance: none;
  width: 4px;
  height: 10px;
  background: #fff;
}

.zoom-level {
  width: 38px;
  text-align: right;
}

/* Windows taskbar */
.taskbar {
  display: flex;
  height: 35px;
  background: #000c10;
  color: #fff;
}

.start {
  width: 40px;
  margin-right: 2px;
  padding-top: 4px;
}

.search {
  width: 322px;
  padding: 4px 11px 0;
  background: #333;
  font-size: 13px;
}

.search::placeholder {
  color: #999;
  opacity: 1;
}

.task-view {
  width: 45px;
  padding-top: 4px;
}

.apps {
  flex: 1;
  display: grid;
  grid-template-columns: repeat(16, 1fr);
}

.apps button {
  position: relative;
  padding-top: 4px;
}

.apps svg {
  position: relative;
}

.apps .open {
  background: #333c40;
}

/* window label showing faintly behind the last icons */
.ghost {
  position: absolute;
  left: 31px;
  top: 15px;
  color: #2b2b2b;
  font-size: 12px;
}

.tray {
  display: grid;
  grid-template-columns: repeat(6, 1fr);
  place-items: center;
  width: 134px;
  padding-top: 4px;
}

.clock {
  width: 69px;
  padding-top: 3px;
  line-height: 15px;
  text-align: center;
}
```
